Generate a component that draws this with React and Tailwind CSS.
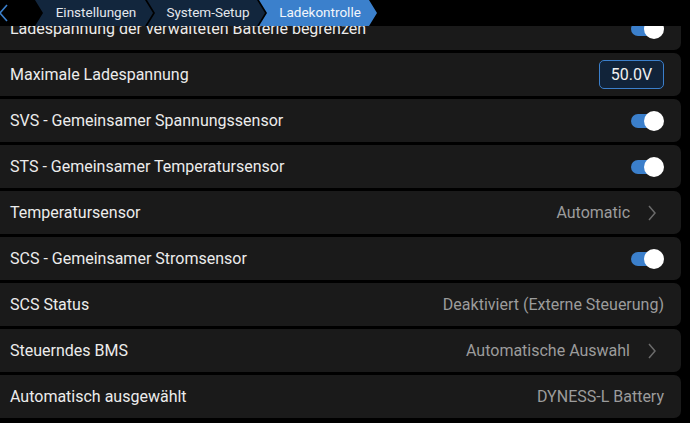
import React from "react";

const tabShape =
  "[clip-path:polygon(0_0,calc(100%-8px)_0,100%_50%,calc(100%-8px)_100%,0_100%,8px_50%)]";

function Toggle() {
  return (
    <div className="relative w-[33px] h-[20px] flex items-center">
      <div className="w-[30px] h-[14px] rounded-full bg-[#3b7fcb]" />
      <div className="absolute right-0 top-0 w-[20px] h-[20px] rounded-full bg-white" />
    </div>
  );
}

function Chevron() {
  return (
    <svg width="10" height="18" viewBox="0 0 10 18" className="ml-[17px] mr-[7px]">
      <path d="M2 2 L8 9 L2 16" fill="none" stroke="#6b6b6b" strokeWidth="1.5" />
    </svg>
  );
}

function Row({ label, children }) {
  return (
    <div className="h-[43px] w-[681px] rounded-r-[7px] bg-[#1a1a1a] flex items-center justify-between pl-[10px] pr-[17px]">
      <span className="text-[16px] leading-none text-[#ececec]">{label}</span>
      <div className="flex items-center text-[16px] leading-none text-[#9c9c9c]">{children}</div>
    </div>
  );
}

// tab background is wider than its slot so the point slides into the next notch
function Tab({ label, active }) {
  return (
    <div className="relative w-[112px] h-full flex items-center justify-center pl-[10px]">
      <div
        className={`${tabShape} absolute left-0 top-0 w-[118px] h-full ${
          active ? "bg-[#3b80cc]" : "bg-[#12263d]"
        }`}
      />
      <span className={`relative text-[13.5px] leading-none ${active ? "text-[#f2f6fb]" : "text-[#e4e8ee]"}`}>
        {label}
      </span>
    </div>
  );
}

export default function App() {
  const rows = [
    { label: "Ladespannung der verwalteten Batterie begrenzen", right: <Toggle /> },
    {
      label: "Maximale Ladespannung",
      right: (
        <div className="h-[29px] w-[65px] rounded-[5px] border-[1.5px] border-[#3b7fcb] bg-[#112339] text-[#f0f0f0] flex items-center justify-center">
          50.0V
        </div>
      ),
    },
    { label: "SVS - Gemeinsamer Spannungssensor", right: <Toggle /> },
    { label: "STS - Gemeinsamer Temperatursensor", right: <Toggle /> },
    { label: "Temperatursensor", right: <><span>Automatic</span><Chevron /></> },
    { label: "SCS - Gemeinsamer Stromsensor", right: <Toggle /> },
    { label: "SCS Status", right: <span>Deaktiviert (Externe Steuerung)</span> },
    { label: "Steuerndes BMS", right: <><span>Automatische Auswahl</span><Chevron /></> },
    { label: "Automatisch ausgewählt", right: <span>DYNESS-L Battery</span> },
  ];

  return (
    <div className="w-[690px] h-[423px] overflow-hidden bg-black font-['Roboto','Liberation_Sans',sans-serif]">
      <div className="h-[26px] bg-black flex items-center">
        <svg width="12" height="20" viewBox="0 0 12 20" className="-ml-[2px]">
          <path d="M9 2 L2 10 L9 18" fill="none" stroke="#3b7fcb" strokeWidth="1.6" />
        </svg>
        <div className="flex h-[26px] ml-[25px]">
          <Tab label="Einstellungen" />
          <Tab label="System-Setup" />
          <Tab label="Ladekontrolle" active />
        </div>
      </div>
      {/* scrolled list viewport, first row partly hidden */}
      <div className="h-[397px] overflow-hidden">
        <div className="-mt-[19px] flex flex-col gap-[3px]">
          {rows.map((r) => (
            <Row key={r.label} label={r.label}>
              {r.right}
            </Row>
          ))}
        </div>
      </div>
    </div>
  );
}
